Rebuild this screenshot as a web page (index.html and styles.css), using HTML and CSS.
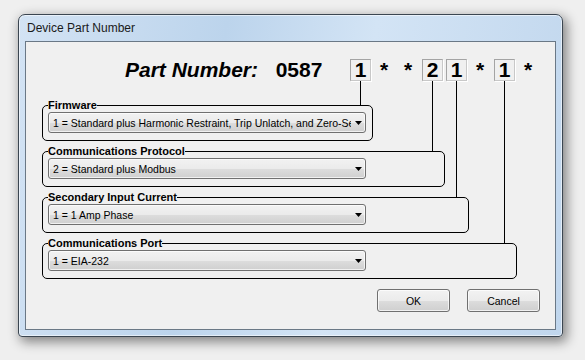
FILE: index.html
```html
<!DOCTYPE html>
<html lang="en">
<head>
  <meta charset="UTF-8" />
  <title>Device Part Number</title>
  <link rel="stylesheet" href="styles.css">
</head>
<body>
  <div class="window">
    <div class="titlebar">Device Part Number</div>
    <div class="client">
      <!-- Part number with the selectable digits -->
      <div class="part-header">
        <span class="pn-label">Part Number:</span>
        <span class="pn-base">0587</span>
        <div class="pn-code">
          <span class="slot"><span class="digit link-1">1</span></span>
          <span class="slot">*</span>
          <span class="slot">*</span>
          <span class="slot"><span class="digit link-2">2</span></span>
          <span class="slot"><span class="digit link-3">1</span></span>
          <span class="slot">*</span>
          <span class="slot"><span class="digit link-4">1</span></span>
          <span class="slot">*</span>
        </div>
      </div>

      <div class="groups">
        <fieldset class="group g1">
          <legend>Firmware</legend>
          <div class="combo">
            <span class="combo-text">1 = Standard plus Harmonic Restraint, Trip Unlatch, and Zero-Sequence</span>
            <svg class="combo-arrow" width="7" height="4" viewBox="0 0 7 4"><path d="M0 0h7L3.5 4z" fill="#000"/></svg>
          </div>
        </fieldset>
        <fieldset class="group g2">
          <legend>Communications Protocol</legend>
          <div class="combo">
            <span class="combo-text">2 = Standard plus Modbus</span>
            <svg class="combo-arrow" width="7" height="4" viewBox="0 0 7 4"><path d="M0 0h7L3.5 4z" fill="#000"/></svg>
          </div>
        </fieldset>
        <fieldset class="group g3">
          <legend>Secondary Input Current</legend>
          <div class="combo">
            <span class="combo-text">1 = 1 Amp Phase</span>
            <svg class="combo-arrow" width="7" height="4" viewBox="0 0 7 4"><path d="M0 0h7L3.5 4z" fill="#000"/></svg>
          </div>
        </fieldset>
        <fieldset class="group g4">
          <legend>Communications Port</legend>
          <div class="combo">
            <span class="combo-text">1 = EIA-232</span>
            <svg class="combo-arrow" width="7" height="4" viewBox="0 0 7 4"><path d="M0 0h7L3.5 4z" fill="#000"/></svg>
          </div>
        </fieldset>
      </div>

      <div class="buttons">
        <button class="btn">OK</button>
        <button class="btn">Cancel</button>
      </div>
    </div>
  </div>
</body>
</html>
```

FILE: styles.css
```css
/* Base */
* { box-sizing: border-box; }
html, body { height: 100%; }
body {
  margin: 0;
  padding: 14px 0 0 18px;
  background: #efefef;
  font-family: 'Liberation Sans', Arial, sans-serif;
  color: #000;
  overflow: hidden;
}

/* Aero window frame */
.window {
  width: 545px;
  height: 323px;
  display: flex;
  flex-direction: column;
  border: 1px solid #3b4651;
  border-radius: 7px 7px 4px 4px;
  background: linear-gradient(100deg, #d3e3f4 0%, #bcd4ec 35%, #d3e4f5 60%, #c0d6ed 100%);
  box-shadow: 3px 4px 12px 1px rgba(0, 0, 0, 0.45), inset 0 0 0 1px rgba(255, 255, 255, 0.55);
}
.titlebar {
  height: 26px;
  line-height: 27px;
  padding-left: 8px;
  font-size: 12px;
  color: #1a1a1a;
}
.client {
  flex: 1;
  margin: 0 6px 6px 6px;
  border: 1px solid #6a7886;
  background: #f0f0f0;
  display: flex;
  flex-direction: column;
  padding: 17px 15px 17px 16px;
}

/* Part number header */
.part-header {
  display: flex;
  height: 22px;
  line-height: 22px;
  font-size: 21px;
  font-weight: bold;
}
.pn-label {
  margin-left: 83px;
  width: 152px;
  font-style: italic;
}
.pn-base { width: 73px; }
.pn-code { display: flex; }
.slot {
  width: 24px;
  text-align: center;
}
.digit {
  position: relative;
  display: block;
  width: 21px;
  height: 22px;
  margin-left: 2px;
  line-height: 20px;
  border: 1px solid #a4a4a4;
  border-right-color: #c8c8c8;
  border-bottom-color: #c8c8c8;
  box-shadow: 1px 1px 0 #fff;
}
.digit::after {
  content: "";
  position: absolute;
  left: 9px;
  top: calc(100% + 1px);
  width: 1px;
  background: #000;
}
.link-1::after { height: 24px; }
.link-2::after { height: 70px; }
.link-3::after { height: 116px; }
.link-4::after { height: 162px; }

/* Group boxes */
.groups {
  display: flex;
  flex-direction: column;
  gap: 4px;
  margin-top: 18px;
}
.group {
  margin: 0;
  min-width: 0;
  padding: 0 4px 7px 5px;
  border: 1px solid #000;
  border-radius: 5px;
}
.g1 { width: 331px; }
.g2 { width: 403px; }
.g3 { width: 427px; }
.g4 { width: 475px; }
.group legend {
  padding: 0;
  font-size: 11px;
  line-height: 13px;
  font-weight: bold;
}

/* Win7 style combo box and buttons */
.combo, .btn {
  border: 1px solid #707070;
  border-radius: 3px;
  background: linear-gradient(#f2f2f2 0%, #ebebeb 50%, #dddddd 51%, #cfcfcf 100%);
  box-shadow: inset 0 0 0 1px rgba(255, 255, 255, 0.7);
  font-family: 'Liberation Sans', Arial, sans-serif;
  font-size: 10.5px;
  color: #000;
}
.combo {
  display: flex;
  align-items: center;
  width: 318px;
  height: 21px;
  padding: 0 3px 0 4px;
}
.combo-text {
  flex: 1;
  overflow: hidden;
  white-space: nowrap;
}
.combo-arrow { margin: 1px 0 0 4px; }

.buttons {
  margin-top: auto;
  display: flex;
  justify-content: flex-end;
  gap: 17px;
}
.btn {
  width: 73px;
  height: 23px;
  padding: 0;
}
```
